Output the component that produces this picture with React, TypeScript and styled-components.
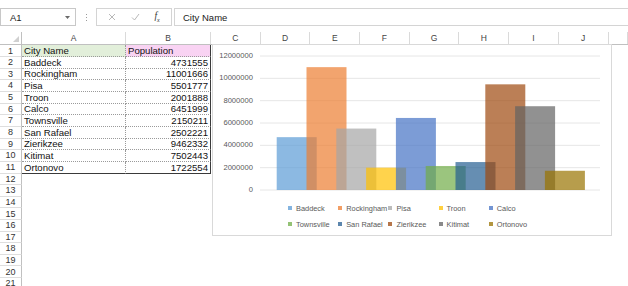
import React from 'react';
import styled, { createGlobalStyle } from 'styled-components';

// --- Data ---

const cities = [
  { name: 'Baddeck', pop: 4731555, color: '#5b9bd5' },
  { name: 'Rockingham', pop: 11001666, color: '#ed7d31' },
  { name: 'Pisa', pop: 5501777, color: '#a5a5a5' },
  { name: 'Troon', pop: 2001888, color: '#ffc000' },
  { name: 'Calco', pop: 6451999, color: '#4472c4' },
  { name: 'Townsville', pop: 2150211, color: '#70ad47' },
  { name: 'San Rafael', pop: 2502221, color: '#255e91' },
  { name: 'Zierikzee', pop: 9462332, color: '#9e480e' },
  { name: 'Kitimat', pop: 7502443, color: '#636363' },
  { name: 'Ortonovo', pop: 1722554, color: '#997300' },
];

const columns = ['A', 'B', 'C', 'D', 'E', 'F', 'G', 'H', 'I', 'J', ''];
const COLS = '22px 104px 85px repeat(8, 49.7px) 1fr';
const ROW_H = 11.67;

// --- Global ---

const GlobalStyle = createGlobalStyle`
  html, body {
    margin: 0;
    padding: 0;
    background: #ffffff;
    overflow: hidden;
  }
  body {
    font-family: "Liberation Sans", Arial, sans-serif;
    color: #1f1f1f;
  }
  * { box-sizing: border-box; }
`;

// --- Formula bar ---

const Page = styled.div`
  width: 628px;
  height: 286px;
  overflow: hidden;
  padding-top: 8px;
`;

const FormulaBar = styled.div`
  display: flex;
  align-items: stretch;
  height: 18px;
`;

const NameBox = styled.div`
  width: 76px;
  display: flex;
  align-items: center;
  justify-content: space-between;
  padding: 0 5px 0 9px;
  border: 1px solid #c8c8c8;
  font-size: 9.5px;
  color: #222;
`;

const Grip = styled.div`
  width: 20px;
  display: flex;
  flex-direction: column;
  align-items: center;
  justify-content: center;
  gap: 2px;

  span {
    width: 1px;
    height: 1px;
    background: #9a9a9a;
  }
`;

const FxBox = styled.div`
  width: 76px;
  display: flex;
  align-items: center;
  justify-content: space-around;
  padding: 0 4px;
  border: 1px solid #d4d4d4;
  margin-right: 2px;
`;

const FxLabel = styled.span`
  font-family: "Liberation Serif", "Times New Roman", serif;
  font-style: italic;
  font-size: 9.5px;
  color: #333;

  sub {
    font-size: 6px;
  }
`;

const FormulaInput = styled.div`
  flex: 1;
  display: flex;
  align-items: center;
  padding-left: 8px;
  border: 1px solid #d4d4d4;
  border-right: none;
  font-size: 9.5px;
  color: #222;
`;

// --- Sheet ---

const Sheet = styled.div`
  position: relative;
  margin-top: 6px;
`;

const HeaderRow = styled.div`
  display: grid;
  grid-template-columns: ${COLS};
  height: 13px;
  border-bottom: 1px solid #c0c0c0;
`;

const ColHead = styled.div`
  position: relative;
  display: flex;
  align-items: center;
  justify-content: center;
  font-size: 8.5px;
  color: #444;
  border-right: 1px solid #dadada;
`;

const Corner = styled(ColHead)`
  border-right: 1px solid #c0c0c0;

  &::after {
    content: '';
    position: absolute;
    right: 2px;
    bottom: 2px;
    border-style: solid;
    border-width: 0 0 6px 6px;
    border-color: transparent transparent #d0d0d0 transparent;
  }
`;

const Row = styled.div`
  display: grid;
  grid-template-columns: ${COLS};
  height: ${ROW_H}px;
`;

const RowHead = styled.div`
  display: flex;
  align-items: center;
  justify-content: center;
  font-size: 9px;
  color: #333;
  border-right: 1px solid #c0c0c0;
  border-bottom: 1px solid #dedede;
`;

const Cell = styled.div<{ $align?: 'left' | 'right'; $bg?: string; $bottom?: string; $right?: string }>`
  display: flex;
  align-items: center;
  justify-content: ${p => (p.$align === 'right' ? 'flex-end' : 'flex-start')};
  padding: 0 2px;
  font-size: 9.6px;
  color: #111;
  white-space: nowrap;
  background: ${p => p.$bg || 'transparent'};
  border-bottom: ${p => p.$bottom || 'none'};
  border-right: ${p => p.$right || 'none'};
`;

// --- Chart ---

const Chart = styled.div`
  position: absolute;
  left: 212px;
  top: 12px;
  width: 400px;
  height: 192px;
  background: #ffffff;
  border: 1px solid #d9d9d9;
  display: flex;
  flex-direction: column;
`;

const Legend = styled.div`
  display: grid;
  grid-template-columns: repeat(5, 50.2px);
  grid-auto-rows: 16px;
  padding-left: 75px;
`;

const LegendItem = styled.div`
  display: flex;
  align-items: center;
  gap: 4px;
  font-size: 7.4px;
  color: #595959;
  white-space: nowrap;
`;

const Swatch = styled.span<{ $color: string }>`
  width: 4px;
  height: 4px;
  background: ${p => p.$color};
  opacity: 0.75;
`;

const DOTTED = '1px dotted #9a9a9a';
const SOLID = '1px solid #3a3a3a';

const PlotArea: React.FC = () => {
  const zeroY = 145;
  const topY = 11;
  const max = 12000000;
  const ticks = [0, 2000000, 4000000, 6000000, 8000000, 10000000, 12000000];
  const scale = (v: number) => ((zeroY - topY) * v) / max;

  return (
    <svg width="398" height="155" viewBox="0 0 398 155">
      {ticks.map(t => (
        <g key={t}>
          <line x1="47" x2="387" y1={zeroY - scale(t)} y2={zeroY - scale(t)} stroke="#e6e6e6" strokeWidth="1" />
          <text
            x="40"
            y={zeroY - scale(t)}
            textAnchor="end"
            dominantBaseline="middle"
            fontSize="7.6"
            fontFamily="Liberation Sans, Arial, sans-serif"
            fill="#595959"
          >
            {t}
          </text>
        </g>
      ))}
      {cities.map((c, i) => (
        <rect
          key={c.name}
          x={63.7 + i * 29.8}
          y={zeroY - scale(c.pop)}
          width="40"
          height={scale(c.pop)}
          fill={c.color}
          fillOpacity="0.7"
        />
      ))}
    </svg>
  );
};

// --- App ---

const App: React.FC = () => {
  const rows = Array.from({ length: 21 }, (_, i) => i + 1);

  const renderCells = (n: number) => {
    const last = n === 11;
    if (n === 1) {
      return (
        <>
          <Cell $bg="#e2efda" $bottom={DOTTED} $right={DOTTED}>City Name</Cell>
          <Cell $bg="#f9d3f3" $bottom={DOTTED} $right={SOLID}>Population</Cell>
        </>
      );
    }
    if (n <= 11) {
      const c = cities[n - 2];
      return (
        <>
          <Cell $bottom={last ? SOLID : DOTTED} $right={DOTTED}>{c.name}</Cell>
          <Cell $align="right" $bottom={last ? SOLID : DOTTED} $right={SOLID}>{c.pop}</Cell>
        </>
      );
    }
    return (
      <>
        <Cell />
        <Cell />
      </>
    );
  };

  return (
    <Page>
      <GlobalStyle />
      <FormulaBar>
        <NameBox>
          <span>A1</span>
          <svg width="5" height="3" viewBox="0 0 5 3">
            <path d="M0 0 L5 0 L2.5 3 Z" fill="#6a6a6a" />
          </svg>
        </NameBox>
        <Grip>
          <span />
          <span />
          <span />
        </Grip>
        <FxBox>
          <svg width="8" height="8" viewBox="0 0 8 8">
            <path d="M1 1 L7 7 M7 1 L1 7" stroke="#b0b0b0" strokeWidth="0.9" fill="none" />
          </svg>
          <svg width="9" height="8" viewBox="0 0 9 8">
            <path d="M1 4.5 L3.5 7 L8 1" stroke="#b0b0b0" strokeWidth="0.9" fill="none" />
          </svg>
          <FxLabel>
            f<sub>x</sub>
          </FxLabel>
        </FxBox>
        <FormulaInput>City Name</FormulaInput>
      </FormulaBar>

      <Sheet>
        <HeaderRow>
          <Corner />
          {columns.map((c, i) => (
            <ColHead key={i}>{c}</ColHead>
          ))}
        </HeaderRow>
        {rows.map(n => (
          <Row key={n}>
            <RowHead>{n}</RowHead>
            {renderCells(n)}
          </Row>
        ))}

        <Chart>
          <PlotArea />
          <Legend>
            {cities.map(c => (
              <LegendItem key={c.name}>
                <Swatch $color={c.color} />
                {c.name}
              </LegendItem>
            ))}
          </Legend>
        </Chart>
      </Sheet>
    </Page>
  );
};

export default App;
